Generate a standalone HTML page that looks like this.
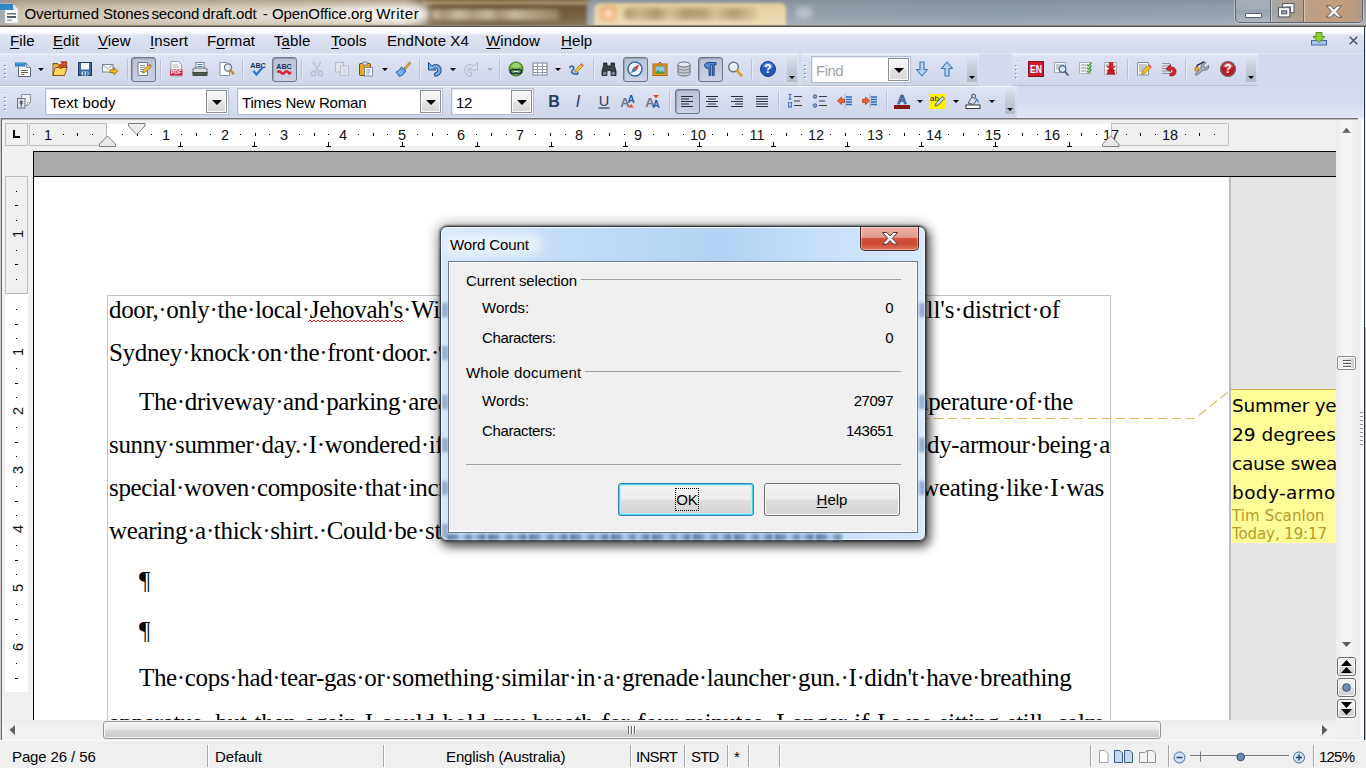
<!DOCTYPE html>
<html lang="en"><head><meta charset="utf-8"><title>Overturned Stones second draft.odt - OpenOffice.org Writer</title>
<style>
*{box-sizing:border-box;margin:0;padding:0}
html,body{width:1366px;height:768px;overflow:hidden;background:#fff}
body{position:relative;font-family:"Liberation Sans",sans-serif;font-size:15px;color:#000}
.a{position:absolute}
.t{position:absolute;white-space:pre;line-height:1}
u{text-decoration:underline;text-underline-offset:2px}
/* title bar */
#title{left:0;top:0;width:1366px;height:27px;overflow:hidden;
 background:linear-gradient(to right,#9aa3ad 0,#b5a68e 14px,#bcad94 250px,#b9a88c 405px,#6b5535 428px,#5e492b 500px,#6e5736 585px,#939ea8 592px,#919da8 780px,#8e9aa6 800px,#8997a6 1000px,#94a0ad 1366px)}
#title .glow{left:10px;top:5px;width:420px;height:18px;border-radius:9px;background:linear-gradient(to right,rgba(255,255,255,.3) 0,rgba(255,255,255,.42) 40%,rgba(255,255,255,.6) 70%,rgba(255,255,255,.95) 92%,rgba(255,255,255,.9) 100%);filter:blur(4px)}
#title .shade{left:0;top:0;width:1366px;height:27px;background:linear-gradient(to bottom,rgba(90,90,90,.18) 0,rgba(120,120,120,.05) 5px,rgba(255,255,255,.05) 50%,rgba(255,255,255,.22) 100%)}
#title .line{left:0;top:25px;width:1366px;height:2px;background:linear-gradient(to bottom,#8d8478 0,#8d8478 50%,#59544d 50%,#59544d 100%)}
#title .txt{left:25px;top:6px;font-size:15px;letter-spacing:-.06px;color:#000}
/* menubar */
#menu{left:0;top:27px;width:1366px;height:27px;background:linear-gradient(to bottom,#fff 0,#fdfdff 4px,#f1f3fa 7px,#dfe4f2 8px,#d9dfef 14px,#d4dbed 100%);border-bottom:1px solid #e1e6f3}
#menu .t{top:6px;font-size:15px;letter-spacing:.1px}
/* toolbars */
#tb{left:0;top:54px;width:1366px;height:64px;background:linear-gradient(to bottom,#d3daed 0,#d3daed 32px,#d5dbee 48px,#e0e5f3 62px,#e4e8f4 64px)}
.bar{position:absolute;height:32px;background:linear-gradient(to bottom,#dde3f2 0,#d6dcee 50%,#d0d7eb 100%);border-top:1px solid #f3f5fb;border-bottom:1px solid #b9c0d4}
.sep{position:absolute;width:1px;height:20px;background:#bac1d4;box-shadow:1px 0 0 #e6eaf5}
.grip{position:absolute;width:1px;height:1px;margin-top:2px;margin-left:-1px;box-shadow:0 0px 0 #6f778c,1px 1px 0 #fff,2px 1px 0 #fff,1px 0px 0 #aab1c4,0 4px 0 #6f778c,1px 5px 0 #fff,2px 5px 0 #fff,1px 4px 0 #aab1c4,0 8px 0 #6f778c,1px 9px 0 #fff,2px 9px 0 #fff,1px 8px 0 #aab1c4,0 12px 0 #6f778c,1px 13px 0 #fff,2px 13px 0 #fff,1px 12px 0 #aab1c4,0 16px 0 #6f778c,1px 17px 0 #fff,2px 17px 0 #fff,1px 16px 0 #aab1c4}
.press{position:absolute;width:25px;height:25px;border:1px solid #6f7688;border-radius:3px;background:linear-gradient(to bottom,#b9c1d6,#cbd2e4);box-shadow:inset 1px 1px 1px rgba(80,90,110,.35)}
.dd{position:absolute;width:0;height:0;border-left:3px solid transparent;border-right:3px solid transparent;border-top:3px solid #000}
.ovf{position:absolute;width:10px;height:26px;background:linear-gradient(to bottom,#dfe3ee 0,#c9cedb 40%,#b4b9c7 100%)}
.ovf:after{content:"";position:absolute;left:2px;bottom:3px;border-left:3px solid transparent;border-right:3px solid transparent;border-top:3px solid #000}
.combo{position:absolute;height:27px;background:#fff;border:1px solid #b4bccf;box-shadow:inset 1px 1px 0 #e8ebf3}
.combo .t{left:4px;top:6px;font-size:15px;letter-spacing:.15px}
.combo .btn{position:absolute;right:1px;top:1px;width:21px;height:23px;border:1px solid #8c8e94;background:linear-gradient(to bottom,#f7f7f7 0,#eeeeee 50%,#e2e2e2 51%,#d8d8d8 100%);box-shadow:inset 0 0 0 1px #fbfbfb}
.combo .btn:after{content:"";position:absolute;left:5px;top:9px;border-left:5px solid transparent;border-right:5px solid transparent;border-top:5px solid #000}
svg{position:absolute;overflow:visible}
</style></head><body>
<!-- TITLE BAR -->
<div id="title" class="a">
 <div class="a" style="left:422px;top:0;width:168px;height:5px;background:#a88f63;filter:blur(1.500px)"></div>
 <div class="a" style="left:432px;top:9px;width:128px;height:11px;border-radius:5px;background:linear-gradient(to right,#bdb098 0,#a39173 10%,#c4b8a0 20%,#a89779 32%,#c2b59d 44%,#a08e6f 52%,#bfb29a 64%,#ad9c7e 78%,#8f7c58 100%);filter:blur(2px);opacity:1"></div>
 <div class="a" style="left:588px;top:0;width:8px;height:26px;background:#97a2ab;filter:blur(2px)"></div>
 <div class="a" style="left:594px;top:3px;width:192px;height:24px;border-radius:6px 6px 0 0;background:#e8d3a4;filter:blur(1.500px)"></div>
 <div class="a" style="left:601px;top:6px;width:15px;height:15px;border-radius:4px;background:radial-gradient(circle,#fff 0,#f7c9a0 35%,#efa25c 70%,#e9c08a 100%);filter:blur(2px)"></div>
 <div class="a" style="left:624px;top:8px;width:134px;height:12px;border-radius:5px;background:linear-gradient(to right,#a89164 0,#c4b084 12%,#a58e62 24%,#d0bc8f 34%,#a89164 46%,#b29c6f 60%,#d0bc8f 68%,#ab9467 82%,#d9c595 100%);filter:blur(2px);opacity:.95"></div>
 <div class="a" style="left:796px;top:7px;width:16px;height:11px;border-radius:5px;background:#c9cfd4;filter:blur(3px);opacity:.8"></div>
 <div class="a shade"></div>
 <div class="a glow"></div>
 <svg style="left:0;top:2px" width="22" height="22" viewBox="0 0 22 22">
  <path d="M1 2h12l5 5v14H5V8H1z" fill="#fff" stroke="#c9ccd2" stroke-width=".8"/>
  <rect x="0" y="2" width="14" height="6" fill="#2f86c9"/>
  <path d="M13 2l5 5h-5z" fill="#dfe4ea"/>
  <rect x="7" y="11" width="9" height="1.6" fill="#6d7780"/><rect x="7" y="14" width="9" height="2" fill="#55616b"/><rect x="7" y="17.5" width="5" height="1.3" fill="#8d979f"/>
 </svg>
 <div class="t txt" style="left:0"><span class="a" style="left:24.5px;top:0">Overturned </span><span class="a" style="left:102.9px;top:0">Stones </span><span class="a" style="left:151.4px;top:0">second </span><span class="a" style="left:202.2px;top:0">draft.odt </span><span class="a" style="left:262.8px;top:0">- </span><span class="a" style="left:271.9px;top:0">OpenOffice.org </span><span class="a" style="left:376.2px;top:0;letter-spacing:.55px">Writer </span></div>
 <!-- window controls -->
 <div class="a" style="left:1235px;top:-1px;width:128px;height:24px;border:1px solid #5f6973;border-top:0;border-radius:0 0 5px 5px;background:linear-gradient(to bottom,rgba(255,255,255,.28),rgba(255,255,255,.12) 45%,rgba(255,255,255,.02) 50%,rgba(255,255,255,.14));box-shadow:0 0 0 1px rgba(255,255,255,.35)"></div>
 <div class="a" style="left:1271px;top:0;width:32px;height:22px;background:linear-gradient(to right,rgba(176,150,122,.25),rgba(184,152,118,.75))"></div><div class="a" style="left:1303px;top:0;width:59px;height:22px;border-radius:0 0 4px 0;background:linear-gradient(to right,#bda084,#c79c72 35%,#c39a74 70%,#b3967c 100%);opacity:.85"></div>
 <div class="a" style="left:1270px;top:0;width:1px;height:22px;background:#5f6973;box-shadow:1px 0 0 rgba(255,255,255,.4)"></div>
 <div class="a" style="left:1303px;top:0;width:1px;height:22px;background:#5f6973;box-shadow:1px 0 0 rgba(255,255,255,.4)"></div>
 <div class="a" style="left:1245px;top:13px;width:17px;height:5px;background:#fff;border:1px solid #56606b;border-radius:1px"></div>
 <svg style="left:1277px;top:2px" width="18.500" height="16.500" viewBox="0 0 18 16"><path d="M5.5 1.5h11v9h-3.500v-5.500h-7.500z" fill="#fff" stroke="#4f5963"/><path d="M8 3.800h6v3" fill="none" stroke="#4f5963" stroke-width="0"/><rect x="1.500" y="5.500" width="11" height="9" fill="#fff" stroke="#4f5963"/><rect x="4.500" y="8.500" width="5" height="3" fill="#9aa5b0" stroke="#4f5963"/><rect x="8.300" y="4" width="5.500" height="1" fill="#8a96a2"/></svg>
 <svg style="left:1324.500px;top:3.500px" width="18" height="15" viewBox="0 0 19 15"><path d="M1.500 1.500h4.500l3.500 3.700 3.500-3.700h4.500l-5.600 6 5.600 6h-4.500l-3.500-3.700-3.500 3.700h-4.500l5.600-6z" fill="#fff" stroke="#4a4f57" stroke-width="1"/></svg>
 <div class="a line"></div>
</div>
<!-- MENU BAR -->
<div id="menu" class="a">
 <div class="t" style="left:10px"><u>F</u>ile</div>
 <div class="t" style="left:53px"><u>E</u>dit</div>
 <div class="t" style="left:98px"><u>V</u>iew</div>
 <div class="t" style="left:150px"><u>I</u>nsert</div>
 <div class="t" style="left:207px">F<u>o</u>rmat</div>
 <div class="t" style="left:274px">T<u>a</u>ble</div>
 <div class="t" style="left:331px"><u>T</u>ools</div>
 <div class="t" style="left:387px">EndNote X4</div>
 <div class="t" style="left:486px"><u>W</u>indow</div>
 <div class="t" style="left:561px"><u>H</u>elp</div>
 <svg style="left:1311px;top:5px" width="16" height="14" viewBox="0 0 16 14"><rect x=".5" y="8.500" width="15" height="4.500" fill="#a8c4e6" stroke="#3f6fb0"/><path d="M5 .5h6v4h3l-6 6-6-6h3z" fill="#8bd02c" stroke="#4d8a12" stroke-width=".9"/></svg>
 <svg style="left:1349px;top:9px" width="9" height="9" viewBox="0 0 9 9"><path d="M.7.7l7.600 7.600M8.300.7l-7.600 7.600" stroke="#4b5166" stroke-width="1.400"/></svg>
</div>
<!-- TOOLBARS -->
<div id="tb" class="a">
<div class="bar" style="left:0;top:0;width:799px"></div>
<div class="bar" style="left:801px;top:0;width:178px"></div>
<div class="bar" style="left:1012px;top:0;width:246px"></div>
<div class="bar" style="left:0;top:32px;width:1017px;border-bottom-color:#d3daed"></div>
<div class="grip" style="left:5px;top:5px"></div>
<svg style="left:15px;top:7px" width="16" height="16" viewBox="0 0 16 16"><path d="M3.500 2.500h8l4 4v9h-12z" fill="#fff" stroke="#5d6873"/><path d="M11.500 2.500v4h4" fill="#e6ebf1" stroke="#5d6873" stroke-width=".8"/><rect x="0" y="1.500" width="10.500" height="4" fill="#2c82c9"/><rect x="1" y="2.300" width="8.500" height="1" fill="#5ea5df"/><path d="M6 9.500h7M6 11.500h7" stroke="#5a646e" stroke-width="1"/><path d="M6 13.500h3.500" stroke="#c87838" stroke-width="1"/></svg>
<div class="dd" style="left:38px;top:14px"></div>
<svg style="left:52px;top:7px" width="16" height="16" viewBox="0 0 16 16"><path d="M1 5v-2.500h4.500l1 1.500h5.500v3" fill="#f2a91e" stroke="#7a4a08" stroke-width=".9"/><path d="M.8 14.500l2.200-8h12l-2.500 8z" fill="#ffd75a" stroke="#7a4a08" stroke-width=".9" stroke-linejoin="round"/><path d="M1 5v9.500" stroke="#7a4a08" stroke-width=".9"/><path d="M7.500 7l4.500-4.500" stroke="#7a2a08" stroke-width="3.400"/><path d="M9 .8h5.700v5.700z" fill="#e8501a" stroke="#7a2a08" stroke-width=".8"/><path d="M7.500 7l4.500-4.500" stroke="#e8501a" stroke-width="2"/></svg>
<svg style="left:77px;top:7px" width="16" height="16" viewBox="0 0 16 16"><rect x="1.500" y="1.500" width="13" height="13" fill="#3d6a9e" stroke="#1c3a60"/><rect x="4" y="2" width="8" height="6.500" fill="#f4f7fb"/><rect x="4.500" y="10.500" width="7" height="4" fill="#cfd8e6"/><rect x="6" y="11" width="1.600" height="3.500" fill="#3d6a9e"/><rect x="9" y="11" width="1.600" height="3.500" fill="#3d6a9e"/></svg>
<svg style="left:102px;top:7px" width="16" height="16" viewBox="0 0 16 16"><rect x=".5" y="3.500" width="10.500" height="7.500" fill="#fbfbf8" stroke="#7f868e"/><path d="M.8 3.800l5 4 5-4" fill="none" stroke="#8a9199" stroke-width=".9"/><path d="M8 8.800h4v-2.300l3.700 3.700-3.700 3.700v-2.300h-4z" fill="#f6c21c" stroke="#8a5a08" stroke-width=".8"/></svg>
<div class="sep" style="left:127px;top:5px"></div>
<div class="press" style="left:131px;top:2.5px"></div>
<svg style="left:136px;top:7px" width="16" height="16" viewBox="0 0 16 16"><path d="M2 1.500h9.500v13h-9.500z" fill="#fdfdfd" stroke="#6e7680"/><path d="M4 4.500h5M4 6.500h5M4 8.500h4M4 10.500h3" stroke="#8b949e"/><path d="M6.500 12l1-3 6-6 2 2-6 6z" fill="#f2c230" stroke="#7a5a10" stroke-width=".7"/><path d="M12.500 4l1-1 2 2-1 1z" fill="#e4668a"/></svg>
<div class="sep" style="left:160px;top:5px"></div>
<svg style="left:168px;top:7px" width="16" height="16" viewBox="0 0 16 16"><path d="M3 .5h7.500l3 3v11.500h-10.500z" fill="#fff" stroke="#9aa1a9"/><path d="M5 4h5M5 6h6" stroke="#a8b0b8"/><rect x="2" y="8.500" width="12.500" height="6" fill="#c8242b"/><text x="8.200" y="13.400" font-family="Liberation Sans,sans-serif" font-weight="bold" font-size="5.500" fill="#fff" text-anchor="middle">PDF</text></svg>
<svg style="left:192px;top:7px" width="16" height="16" viewBox="0 0 16 16"><rect x="4" y="1.500" width="8" height="6" fill="#fff" stroke="#7b828a"/><path d="M5.500 3.500h5M5.500 5.500h5" stroke="#4f86c6"/><path d="M1 8.500q0-1.500 1.500-1.500h11q1.500 0 1.500 1.500v4.500h-14z" fill="#d8dbdf" stroke="#5d646c" stroke-width=".9"/><rect x="1" y="11.500" width="14" height="3" fill="#4d5a4e" stroke="#353d36" stroke-width=".8"/></svg>
<svg style="left:218px;top:7px" width="16" height="16" viewBox="0 0 16 16"><path d="M2 1.500h7l2.500 2.500v10.500h-9.500z" fill="#fff" stroke="#8a9199"/><circle cx="10" cy="6.500" r="3.600" fill="#dcecf8" fill-opacity=".85" stroke="#6a7480" stroke-width="1.200"/><path d="M12.500 9.200l3 3.500" stroke="#c08a28" stroke-width="2.200" stroke-linecap="round"/></svg>
<div class="sep" style="left:242px;top:5px"></div>
<svg style="left:250px;top:7px" width="16" height="16" viewBox="0 0 16 16"><text x="8" y="6.500" font-family="Liberation Sans,sans-serif" font-weight="bold" font-size="8" fill="#1b2f55" text-anchor="middle" textLength="15.500" lengthAdjust="spacingAndGlyphs">ABC</text><path d="M3.500 10l3 3.500 6-7" fill="none" stroke="#2d78d2" stroke-width="2.400"/></svg>
<div class="press" style="left:272px;top:2.5px"></div>
<svg style="left:276px;top:7px" width="16" height="16" viewBox="0 0 16 16"><text x="8" y="7.500" font-family="Liberation Sans,sans-serif" font-weight="bold" font-size="8" fill="#1b2f55" text-anchor="middle" textLength="15.500" lengthAdjust="spacingAndGlyphs">ABC</text><path d="M1.500 11.500q1.800-2.500 3.600 0t3.600 0 3.600 0 2.200-.8" fill="none" stroke="#d3242a" stroke-width="2.300"/></svg>
<div class="sep" style="left:301px;top:5px"></div>
<svg style="left:309px;top:7px" width="16" height="16" viewBox="0 0 16 16"><path d="M4 1l5.500 9M12 1l-5.500 9" stroke="#bcc2d0" stroke-width="1.500"/><circle cx="4.500" cy="12.500" r="2.200" fill="none" stroke="#b8bdca" stroke-width="1.400"/><circle cx="11.500" cy="12.500" r="2.200" fill="none" stroke="#b8bdca" stroke-width="1.400"/></svg>
<svg style="left:334px;top:7px" width="16" height="16" viewBox="0 0 16 16"><rect x="1.500" y="1.500" width="8" height="9.500" fill="#dfe3ec" stroke="#b4bac8"/><rect x="6.500" y="5" width="8" height="9.500" fill="#e6e9f0" stroke="#b4bac8"/><path d="M8.500 8h4M8.500 10h4M8.500 12h4" stroke="#c0c5d1"/></svg>
<svg style="left:358px;top:7px" width="16" height="16" viewBox="0 0 16 16"><rect x="1.500" y="2.500" width="11" height="12" rx="1" fill="#e3ac1e" stroke="#6d4a10"/><rect x="4.500" y="1" width="5" height="3" rx="1" fill="#d8dce2" stroke="#6a717a" stroke-width=".8"/><rect x="6.500" y="6.500" width="8" height="8.500" fill="#fff" stroke="#7d848c" stroke-width=".9"/><path d="M8.500 9h4M8.500 11h4M8.500 13h3" stroke="#6d8fb8"/></svg>
<div class="dd" style="left:381.5px;top:14px"></div>
<svg style="left:395px;top:7px" width="16" height="16" viewBox="0 0 16 16"><path d="M9 7l5.500-6 1.200 1.200-5.200 6.300z" fill="#e6b23c" stroke="#8a6414" stroke-width=".7"/><path d="M1 11q3-.5 5.500-5l4.500 4q-3 4.500-6.500 5.500z" fill="#5a9de2" stroke="#1f57a0" stroke-width=".9"/><path d="M3 12.500l3-3M5 14l3-3.500" stroke="#cfe2f7" stroke-width=".8"/></svg>
<div class="sep" style="left:419px;top:5px"></div>
<svg style="left:427px;top:7px" width="16" height="16" viewBox="0 0 16 16"><path d="M5.500 6.500q4.500-3 6.500 .8t-3 6.200" stroke="#1f4f8c" stroke-width="4.400" fill="none" stroke-linecap="round"/><path d="M1.500 1.500v7.500h7.500z" fill="#7ab0e4" stroke="#1f4f8c" stroke-linejoin="round"/><path d="M5.500 6.500q4.500-3 6.500 .8t-3 6.200" stroke="#7ab0e4" stroke-width="2.400" fill="none" stroke-linecap="round"/></svg>
<div class="dd" style="left:450px;top:14px"></div>
<svg style="left:463px;top:7px" width="16" height="16" viewBox="0 0 16 16"><path d="M10.500 6.500q-4.500-3-6.500 .8t3 6.200" stroke="#b4bbcb" stroke-width="4.400" fill="none" stroke-linecap="round"/><path d="M14.500 1.500v7.500h-7.500z" fill="#d9deea" stroke="#b4bbcb" stroke-linejoin="round"/><path d="M10.500 6.500q-4.500-3-6.500 .8t3 6.200" stroke="#d9deea" stroke-width="2.400" fill="none" stroke-linecap="round"/></svg>
<div class="dd" style="left:486.5px;top:14px;border-top-color:#aab0c0"></div>
<div class="sep" style="left:499px;top:5px"></div>
<svg style="left:508px;top:7px" width="16" height="16" viewBox="0 0 16 16"><circle cx="8" cy="8" r="7" fill="#6cb63c" stroke="#2f6a1c"/><path d="M3 5q2-3 5-3.500 3 .5 5 3.500-2 2-5 2t-5-2z" fill="#a6dc78" fill-opacity=".8"/><rect x="2.500" y="8.500" width="5.500" height="4" rx="2" fill="none" stroke="#1e2f50" stroke-width="1.500"/><rect x="8" y="8.500" width="5.500" height="4" rx="2" fill="none" stroke="#1e2f50" stroke-width="1.500"/><path d="M6 10.500h4" stroke="#e8eef8" stroke-width="1.300"/></svg>
<svg style="left:532px;top:7px" width="16" height="16" viewBox="0 0 16 16"><rect x="1" y="2" width="14" height="12" fill="#fff" stroke="#7d8590"/><path d="M1 5.500h14M1 8.500h14M1 11.500h14M5.500 2v12M10.500 2v12" stroke="#8a929c" stroke-width=".9"/></svg>
<div class="dd" style="left:555px;top:14px"></div>
<svg style="left:568px;top:7px" width="16" height="16" viewBox="0 0 16 16"><path d="M1.500 7q1.500-3 3.500-1.500t-.5 4 2 3.500 3-2" fill="none" stroke="#2c64b8" stroke-width="1.600"/><path d="M6.500 11.500l1-3 6-6 2 2-6 6z" fill="#f4c838" stroke="#8a6a12" stroke-width=".7"/><path d="M12.500 3.500l1-1 2 2-1 1z" fill="#e8608a"/></svg>
<div class="sep" style="left:593px;top:5px"></div>
<svg style="left:601px;top:7px" width="16" height="16" viewBox="0 0 16 16"><path d="M2.500 2h3.500v3h4v-3h3.500v3l1.500 5v4.500h-5v-5h-4v5h-5v-4.500l1.500-5z" fill="#3c4048" stroke="#15171b" stroke-width=".8"/><rect x="2" y="11" width="3.500" height="3" fill="#7a828e"/><rect x="10.500" y="11" width="3.500" height="3" fill="#7a828e"/></svg>
<div class="press" style="left:622.5px;top:2.5px"></div>
<svg style="left:627px;top:7px" width="16" height="16" viewBox="0 0 16 16"><circle cx="8" cy="8" r="7" fill="#f6f8fb" stroke="#3d6aa8" stroke-width="1.600"/><path d="M12.500 3.500l-3 6-3-3z" fill="#d8342c"/><path d="M3.500 12.500l3-6 3 3z" fill="#3a6fc0"/></svg>
<svg style="left:652px;top:7px" width="16" height="16" viewBox="0 0 16 16"><rect x="1" y="3" width="14" height="11.500" fill="#f2a420" stroke="#a86008"/><rect x="3" y="5" width="10" height="7.500" fill="#8fc8f0" stroke="#7a4a08" stroke-width=".6"/><path d="M3 12.500l3-4 2.500 2.500 2-1.500 2.500 3z" fill="#4fa030"/><path d="M6 3l2-2 2 2" fill="none" stroke="#a86008"/></svg>
<svg style="left:676px;top:7px" width="16" height="16" viewBox="0 0 16 16"><path d="M2 3.500v9q0 2.500 6 2.500t6-2.500v-9z" fill="#c8ccd2" stroke="#6b727b"/><ellipse cx="8" cy="3.500" rx="6" ry="2.500" fill="#e8eaee" stroke="#6b727b"/><path d="M2 6.500q0 2.500 6 2.500t6-2.500M2 9.500q0 2.500 6 2.500t6-2.500" fill="none" stroke="#7d848d"/></svg>
<div class="press" style="left:698px;top:2.5px"></div>
<svg style="left:702px;top:7px" width="16" height="16" viewBox="0 0 16 16"><path d="M7 14.500v-7q-4.500 0-4.500-3t4.500-3h7v2.200h-1.800v10.800h-1.800v-10.800h-1.600v10.800z" fill="#4c8ad2" stroke="#173f7c" stroke-width=".9"/></svg>
<svg style="left:727px;top:7px" width="16" height="16" viewBox="0 0 16 16"><circle cx="6.500" cy="6" r="4.800" fill="#e4f0fb" stroke="#6d7782" stroke-width="1.400"/><path d="M4 4.500q1.500-2 4-1.500" stroke="#fff" stroke-width="1.200" fill="none"/><path d="M10 9.800l4.500 4.700" stroke="#d49a2a" stroke-width="2.600" stroke-linecap="round"/></svg>
<div class="sep" style="left:751px;top:5px"></div>
<svg style="left:760px;top:7px" width="16" height="16" viewBox="0 0 16 16"><circle cx="8" cy="8" r="7.500" fill="#2458b8" stroke="#143a84"/><path d="M2.500 5.500q2-4 5.500-4t5.500 4q-2.500 1.500-5.500 1.500t-5.500-1.500z" fill="#6b98e0" fill-opacity=".7"/><text x="8" y="12.300" font-family="Liberation Sans,sans-serif" font-weight="bold" font-size="12" fill="#fff" text-anchor="middle">?</text></svg>
<div class="ovf" style="left:787px;top:2px"></div>
<div class="grip" style="left:805px;top:5px"></div>
<div class="combo" style="left:811px;top:2px;width:100px"><div class="t" style="color:#a3a3a3;font-size:15px;top:6px;letter-spacing:-.5px">Find</div><div class="btn"></div></div>
<svg style="left:914px;top:7px" width="16" height="16" viewBox="0 0 16 16"><path d="M6 1h4v7.500h3.500l-5.500 6.500-5.500-6.500h3.500z" fill="#b3d5f1" stroke="#3a78b5" stroke-width="1.100" stroke-linejoin="round"/></svg>
<svg style="left:939px;top:7px" width="16" height="16" viewBox="0 0 16 16"><path d="M6 15h4v-7.500h3.500l-5.500-6.500-5.500 6.500h3.500z" fill="#b3d5f1" stroke="#3a78b5" stroke-width="1.100" stroke-linejoin="round"/></svg>
<div class="ovf" style="left:967px;top:2px"></div>
<div class="grip" style="left:1016px;top:5px"></div>
<svg style="left:1028px;top:7px" width="16" height="16" viewBox="0 0 16 16"><rect x=".5" y=".5" width="15" height="15" fill="#c81e2c" stroke="#8a0f1a"/><text x="8" y="12" font-family="Liberation Sans,sans-serif" font-weight="bold" font-size="10" fill="#fff" text-anchor="middle" textLength="12" lengthAdjust="spacingAndGlyphs">EN</text></svg>
<svg style="left:1053px;top:7px" width="16" height="16" viewBox="0 0 16 16"><path d="M1.500 1.500h11v10h-11z" fill="#f4f5f7" stroke="#9aa1a9"/><path d="M3 4h8M3 6h8M3 8h5" stroke="#9aa2ac"/><path d="M2 11.500l2.500 3v-3z" fill="#cfd3d8"/><circle cx="9.500" cy="8" r="3.300" fill="#cfe6f8" fill-opacity=".9" stroke="#46698c" stroke-width="1.200"/><path d="M12 10.500l3.300 4" stroke="#4a5a6a" stroke-width="1.800"/></svg>
<svg style="left:1078px;top:7px" width="16" height="16" viewBox="0 0 16 16"><path d="M1.500 1.500h11v11h-11z" fill="#f4f5f7" stroke="#a8aeb5"/><path d="M3 4h5M3 7h5M3 10h5" stroke="#8f979f"/><path d="M9 3.500l1.500 1.500 3-3.500M9 6.800l1.500 1.500 3-3.500M9 10l1.500 1.500 3-3.500" fill="none" stroke="#3fa838" stroke-width="1.500"/><path d="M2 12.500l2.500 3v-3z" fill="#d4d7dc"/></svg>
<svg style="left:1103px;top:7px" width="16" height="16" viewBox="0 0 16 16"><path d="M1.500 1.500h12v12h-12z" fill="#f0f1f3" stroke="#a8aeb5"/><path d="M3 4h9M3 12h9" stroke="#8f979f"/><path d="M6 1h4v4h3l-5 4.500-5-4.500h3z" fill="#d0202a"/><path d="M3 10l5-3.500 5 3.500-2 .5 1.500 3h-9l1.500-3z" fill="#c01822"/></svg>
<div class="sep" style="left:1127px;top:5px"></div>
<svg style="left:1136px;top:7px" width="16" height="16" viewBox="0 0 16 16"><path d="M1.500 1.500h11v12.500h-11z" fill="#fbfbfb" stroke="#8a9098"/><path d="M3 4h8M3 6h8M3 8h6M3 10h5" stroke="#8f979f"/><path d="M5.500 13.500l1-3.500 6-6 2.500 2.500-6 6z" fill="#f2bf2c" stroke="#94660c" stroke-width=".7"/><path d="M12 4.500l1.200-1.200 2.500 2.500-1.200 1.200z" fill="#e25a4a"/></svg>
<svg style="left:1161px;top:7px" width="16" height="16" viewBox="0 0 16 16"><path d="M1 2.500h8M1 5h7M1 7.500h6M1 10h7M1 12.500h8" stroke="#8f979f"/><path d="M5 8l4.500-4.500v2.500q5.500 0 5.500 4.500t-6 4.500v-2.500q3 0 3-2.200t-2.500-2.200v2.500z" fill="#d8262c" stroke="#8c0e14" stroke-width=".8"/></svg>
<div class="sep" style="left:1185px;top:5px"></div>
<svg style="left:1194px;top:7px" width="16" height="16" viewBox="0 0 16 16"><path d="M2.500 14.500l-1.300-1.300 6-6.200q-1-3 1.300-4.800 1.800-1.200 3.500-.5l-2.500 2.500 .5 2 2 .5 2.500-2.500q.8 2-.6 3.700-1.800 2-4.600 1.100z" fill="#aab2bc" stroke="#565e68" stroke-width=".8"/><path d="M2 8l1.200-3.500 7-4" stroke="#1b1d22" stroke-width="1.300" fill="none"/><path d="M.8 7.500q1.200-2.500 3-1.500t.5 3-3 1z" fill="#f0b424" stroke="#8e640c" stroke-width=".7"/></svg>
<svg style="left:1219.5px;top:7px" width="16" height="16" viewBox="0 0 16 16"><circle cx="8" cy="8" r="7.500" fill="#c01c26" stroke="#6e6e72" stroke-width="1.200"/><path d="M2.800 5.500q2-3.800 5.200-3.800t5.200 3.800q-2.500 1.300-5.200 1.300t-5.200-1.300z" fill="#e88a8e" fill-opacity=".7"/><text x="8" y="12.300" font-family="Liberation Sans,sans-serif" font-weight="bold" font-size="12" fill="#fff" text-anchor="middle">?</text></svg>
<div class="ovf" style="left:1246px;top:2px"></div>
<div class="grip" style="left:5px;top:37px"></div>
<svg style="left:16px;top:39px" width="16" height="16" viewBox="0 0 16 16"><path d="M5.500 1.500h9v8l-3 3h-6z" fill="#eef0f4" stroke="#8d949e"/><path d="M14.500 9.500h-3v3z" fill="#fff" stroke="#8d949e" stroke-width=".7"/><rect x="1.500" y="5.500" width="7.500" height="9.500" fill="#dfe3ea" stroke="#6d747e"/><path d="M5.200 7.500v6M3.500 10h3.500M3.800 8.200h2.800" stroke="#3c424a" stroke-width="1.100"/></svg>
<div class="combo" style="left:45px;top:34px;width:184px"><div class="t">Text body</div><div class="btn"></div></div>
<div class="combo" style="left:237px;top:34px;width:206px"><div class="t" style="letter-spacing:-.17px">Times New Roman</div><div class="btn"></div></div>
<div class="combo" style="left:451px;top:34px;width:83px"><div class="t" style="letter-spacing:-.3px">12</div><div class="btn"></div></div>
<svg style="left:546px;top:39px" width="16" height="16" viewBox="0 0 16 16"><text x="8" y="13.500" font-family="Liberation Sans,sans-serif" font-weight="bold" font-size="16" fill="#2b3d5c" text-anchor="middle">B</text></svg>
<svg style="left:570px;top:39px" width="16" height="16" viewBox="0 0 16 16"><text x="8" y="13.500" font-family="Liberation Sans,sans-serif" font-style="italic" font-size="16" fill="#2b3d5c" text-anchor="middle">I</text></svg>
<svg style="left:596px;top:39px" width="16" height="16" viewBox="0 0 16 16"><text x="8" y="12.500" font-family="Liberation Sans,sans-serif" font-size="14.500" fill="#2b3d5c" text-anchor="middle">U</text><path d="M2.500 15h11" stroke="#2b3d5c" stroke-width="1.200"/></svg>
<svg style="left:620px;top:39px" width="16" height="16" viewBox="0 0 16 16"><text x="5" y="14" font-family="Liberation Sans,sans-serif" font-weight="bold" font-size="13" fill="#6d7686" text-anchor="middle">A</text><text x="11" y="9.500" font-family="Liberation Sans,sans-serif" font-weight="bold" font-size="10" fill="#1e5aa8" text-anchor="middle">A</text><path d="M8 14.500l3-3.500 3 3.500z" fill="#e8502a"/></svg>
<svg style="left:645px;top:39px" width="16" height="16" viewBox="0 0 16 16"><text x="5" y="14" font-family="Liberation Sans,sans-serif" font-weight="bold" font-size="13" fill="#6d7686" text-anchor="middle">A</text><text x="11" y="14.500" font-family="Liberation Sans,sans-serif" font-weight="bold" font-size="10" fill="#1e5aa8" text-anchor="middle">A</text><path d="M8 2l3 3.500 3-3.500z" fill="#e8502a"/></svg>
<div class="sep" style="left:669px;top:37px"></div>
<div class="press" style="left:674.5px;top:34.5px"></div>
<svg style="left:679px;top:39px" width="16" height="16" viewBox="0 0 16 16"><path d="M2 3.500h12M2 6h8M2 8.500h12M2 11h8M2 13.500h12" stroke="#2a2e36" stroke-width="1.100"/></svg>
<svg style="left:703.5px;top:39px" width="16" height="16" viewBox="0 0 16 16"><path d="M2 3.500h12M4 6h8M2 8.500h12M4 11h8M2 13.500h12" stroke="#2a2e36" stroke-width="1.100"/></svg>
<svg style="left:728.5px;top:39px" width="16" height="16" viewBox="0 0 16 16"><path d="M2 3.500h12M6 6h8M2 8.500h12M6 11h8M2 13.500h12" stroke="#2a2e36" stroke-width="1.100"/></svg>
<svg style="left:754px;top:39px" width="16" height="16" viewBox="0 0 16 16"><path d="M2 3.500h12M2 6h12M2 8.500h12M2 11h12M2 13.500h12" stroke="#2a2e36" stroke-width="1.100"/></svg>
<div class="sep" style="left:778px;top:37px"></div>
<svg style="left:787px;top:39px" width="16" height="16" viewBox="0 0 16 16"><path d="M7 3.500h8M7 8h6M7 12.500h8" stroke="#3a3f48" stroke-width="1.200"/><path d="M1.500 1.500h3M3 1.500v4.500M1.500 6h3M1 9.500h1.500M3.500 9.500h1.500M1.700 9.500v4.500M4.300 9.500v4.500M1 14h4" stroke="#2f66b0" stroke-width="1"/></svg>
<svg style="left:812px;top:39px" width="16" height="16" viewBox="0 0 16 16"><path d="M7 3.500h8M7 8h6M7 12.500h8" stroke="#3a3f48" stroke-width="1.200"/><circle cx="3" cy="3.500" r="1.700" fill="#8fb4e0" stroke="#244f90" stroke-width=".9"/><circle cx="3" cy="12.500" r="1.700" fill="#8fb4e0" stroke="#244f90" stroke-width=".9"/></svg>
<svg style="left:837px;top:39px" width="16" height="16" viewBox="0 0 16 16"><path d="M8 1.500v13" stroke="#6d7480" stroke-width=".9" stroke-dasharray="1 1"/><path d="M9 4h6M9 6.500h6M9 9h6M9 11.500h6" stroke="#2f6fc0" stroke-width="1.300"/><path d="M7.500 6.200h-3v-2.200l-4 3.800 4 3.800v-2.200h3z" fill="#f0642c" stroke="#a8300c" stroke-width=".7"/></svg>
<svg style="left:862px;top:39px" width="16" height="16" viewBox="0 0 16 16"><path d="M8 1.500v13" stroke="#6d7480" stroke-width=".9" stroke-dasharray="1 1"/><path d="M9 4h6M9 6.500h6M9 9h6M9 11.500h6" stroke="#2f6fc0" stroke-width="1.300"/><path d="M.5 6.200h3v-2.200l4 3.800-4 3.800v-2.200h-3z" fill="#f0642c" stroke="#a8300c" stroke-width=".7"/></svg>
<div class="sep" style="left:886px;top:37px"></div>
<svg style="left:893.5px;top:39px" width="16" height="16" viewBox="0 0 16 16"><text x="8" y="10.500" font-family="Liberation Sans,sans-serif" font-weight="bold" font-size="13" fill="#5a8ad0" stroke="#1c3f7c" stroke-width=".6" text-anchor="middle">A</text><rect x="0" y="12" width="16" height="4" fill="#8c1414"/></svg>
<div class="dd" style="left:917px;top:46px"></div>
<svg style="left:930px;top:39px" width="16" height="16" viewBox="0 0 16 16"><rect x="0" y="1" width="15" height="15" fill="#fff200"/><text x="4.500" y="8" font-family="Liberation Sans,sans-serif" font-size="8" fill="#222" text-anchor="middle">ab</text><path d="M5 13l1-3 6.500-6.500 2.200 2.200-6.500 6.500z" fill="#c8ccd4" stroke="#4a525e" stroke-width=".8"/></svg>
<div class="dd" style="left:953px;top:46px"></div>
<svg style="left:965px;top:39px" width="16" height="16" viewBox="0 0 16 16"><rect x="1" y="12" width="14" height="3.500" fill="#fff" stroke="#222" stroke-width=".9"/><path d="M3 10l4-6 5 2.500-3.500 5z" fill="#d4dae4" stroke="#3c4654" stroke-width=".9"/><path d="M7 4q-1-3 1.500-3t2 3.500" fill="none" stroke="#3c4654" stroke-width="1"/><path d="M11 5q3 1 3 5-2-1-3-3z" fill="#5a8ad0"/></svg>
<div class="dd" style="left:989px;top:46px"></div>
<div class="ovf" style="left:1005px;top:34px"></div>
</div>
<!-- RULER + DOCUMENT -->
<style>
#work{left:0;top:118px;width:1366px;height:622px;background:#f0f0f0;overflow:hidden}
#hr{left:29px;top:5px;width:1200px;height:23px;background:#fff;border:1px solid #bdbdbd;border-bottom-color:#fff;border-top-color:#f4f4f4;font-size:14.500px}
#hr .g{position:absolute;top:-1px;height:23px;background:#f0f0f0;border-bottom:1px solid #bdbdbd;border-top:1px solid #bdbdbd}
#hr .n{position:absolute;top:2px;width:30px;margin-left:-15px;text-align:center;font-size:14.500px;line-height:18px;color:#111}
#hr .d{position:absolute;top:10px;width:1px;height:1px;background:#000}
#hr .h{position:absolute;top:9px;width:1px;height:3px;background:#000}
#hr .tab{position:absolute;top:18px;width:5px;height:5px;border-bottom:1px solid #000;margin-left:-3px}
#hr .tab:after{content:"";position:absolute;left:2px;top:0;width:1px;height:4px;background:#000}
#vr{left:5px;top:58px;width:23px;height:516px;background:#fff}
#vr .g{position:absolute;left:0;top:0;width:23px;height:118px;background:#f0f0f0;border:1px solid #bdbdbd}
#vr .n{position:absolute;left:4px;width:18px;height:30px;margin-top:-15px;font-size:14.500px;line-height:18px;color:#111}
#vr .n span{position:absolute;left:0;top:6px;width:18px;height:18px;text-align:center;transform:rotate(-90deg)}
#vr .d{position:absolute;left:11px;width:1px;height:1px;background:#000;margin-top:1px}
#vr .h{position:absolute;left:10px;width:3px;height:1px;background:#000;margin-top:1px}
#docpg{left:33px;top:33px;width:1303px;height:570px;background:#fff;border-left:1px solid #000;overflow:hidden}
#docpg .band{left:0;top:0;width:1303px;height:26px;background:#aaa;border-top:1px solid #000;border-bottom:1px solid #000}
#docpg .cm{left:1195px;top:26px;width:108px;height:560px;background:#e6e6e6;border-left:2px solid #bcbcbc}
.dl{position:absolute;white-space:pre;font-family:"Liberation Serif",serif;font-size:25px;line-height:28px;letter-spacing:-.34px;color:#000}

</style>
<div id="work" class="a">
<div class="a" style="left:0;top:0;width:1358px;height:1px;background:#767676"></div><div class="a" style="left:2px;top:1px;width:1356px;height:1px;background:#b8b8b8"></div>
<div class="a" style="left:0;top:0;width:1px;height:622px;background:#c8c8c8"></div><div class="a" style="left:1px;top:0;width:1px;height:622px;background:#6e6e6e"></div>
<div class="a" style="left:5px;top:5px;width:23px;height:23px;border:1px solid #bdbdbd;background:#f0f0f0"><div class="a" style="left:7px;top:6px;width:2px;height:8px;background:#000"></div><div class="a" style="left:7px;top:12px;width:7px;height:2px;background:#000"></div></div>
<div id="hr" class="a">
<div class="g" style="left:0;width:77px;border-right:1px solid #bdbdbd"></div>
<div class="g" style="left:1081px;width:117px;border-left:1px solid #bdbdbd"></div>
<div class="d" style="left:3px"></div>
<div class="n" style="left:18px">1</div>
<div class="d" style="left:33px"></div>
<div class="h" style="left:47px"></div>
<div class="d" style="left:62px"></div>
<div class="d" style="left:92px"></div>
<div class="h" style="left:107px"></div>
<div class="d" style="left:121px"></div>
<div class="n" style="left:136px">1</div>
<div class="d" style="left:151px"></div>
<div class="h" style="left:166px"></div>
<div class="d" style="left:180px"></div>
<div class="n" style="left:195px">2</div>
<div class="d" style="left:210px"></div>
<div class="h" style="left:225px"></div>
<div class="d" style="left:239px"></div>
<div class="n" style="left:254px">3</div>
<div class="d" style="left:269px"></div>
<div class="h" style="left:284px"></div>
<div class="d" style="left:298px"></div>
<div class="n" style="left:313px">4</div>
<div class="d" style="left:328px"></div>
<div class="h" style="left:343px"></div>
<div class="d" style="left:357px"></div>
<div class="n" style="left:372px">5</div>
<div class="d" style="left:387px"></div>
<div class="h" style="left:402px"></div>
<div class="d" style="left:417px"></div>
<div class="n" style="left:431px">6</div>
<div class="d" style="left:446px"></div>
<div class="h" style="left:461px"></div>
<div class="d" style="left:476px"></div>
<div class="n" style="left:490px">7</div>
<div class="d" style="left:505px"></div>
<div class="h" style="left:520px"></div>
<div class="d" style="left:535px"></div>
<div class="n" style="left:549px">8</div>
<div class="d" style="left:564px"></div>
<div class="h" style="left:579px"></div>
<div class="d" style="left:594px"></div>
<div class="n" style="left:608px">9</div>
<div class="d" style="left:623px"></div>
<div class="h" style="left:638px"></div>
<div class="d" style="left:653px"></div>
<div class="n" style="left:668px">10</div>
<div class="d" style="left:682px"></div>
<div class="h" style="left:697px"></div>
<div class="d" style="left:712px"></div>
<div class="n" style="left:727px">11</div>
<div class="d" style="left:741px"></div>
<div class="h" style="left:756px"></div>
<div class="d" style="left:771px"></div>
<div class="n" style="left:786px">12</div>
<div class="d" style="left:800px"></div>
<div class="h" style="left:815px"></div>
<div class="d" style="left:830px"></div>
<div class="n" style="left:845px">13</div>
<div class="d" style="left:859px"></div>
<div class="h" style="left:874px"></div>
<div class="d" style="left:889px"></div>
<div class="n" style="left:904px">14</div>
<div class="d" style="left:918px"></div>
<div class="h" style="left:933px"></div>
<div class="d" style="left:948px"></div>
<div class="n" style="left:963px">15</div>
<div class="d" style="left:978px"></div>
<div class="h" style="left:992px"></div>
<div class="d" style="left:1007px"></div>
<div class="n" style="left:1022px">16</div>
<div class="d" style="left:1037px"></div>
<div class="h" style="left:1051px"></div>
<div class="d" style="left:1066px"></div>
<div class="n" style="left:1081px">17</div>
<div class="d" style="left:1096px"></div>
<div class="h" style="left:1110px"></div>
<div class="d" style="left:1125px"></div>
<div class="n" style="left:1140px">18</div>
<div class="d" style="left:1155px"></div>
<div class="h" style="left:1169px"></div>
<div class="d" style="left:1184px"></div>
<div class="tab" style="left:151px"></div>
<div class="tab" style="left:225px"></div>
<div class="tab" style="left:299px"></div>
<div class="tab" style="left:373px"></div>
<div class="tab" style="left:448px"></div>
<div class="tab" style="left:522px"></div>
<div class="tab" style="left:596px"></div>
<div class="tab" style="left:670px"></div>
<div class="tab" style="left:744px"></div>
<div class="tab" style="left:818px"></div>
<div class="tab" style="left:892px"></div>
<div class="tab" style="left:966px"></div>
<div class="tab" style="left:1040px"></div>
</div>
<svg style="left:99px;top:3px" width="48" height="28" viewBox="0 0 48 28"><path d="M.5 25.500v-2.500l8-8 8 8v2.500z" fill="#e9e9e9" stroke="#7d7d7d"/><path d="M29.500 2.500h16.500v2.500l-8.200 8.500-8.300-8.500z" fill="#ececec" stroke="#7d7d7d"/></svg>
<svg style="left:1102px;top:17px" width="18" height="12" viewBox="0 0 18 12"><path d="M.5 11.500v-2.500l8.200-8 8.200 8v2.500z" fill="#e9e9e9" stroke="#7d7d7d"/></svg>
<div id="vr" class="a"><div class="g"></div>
<div class="d" style="top:14px"></div>
<div class="h" style="top:28px"></div>
<div class="d" style="top:43px"></div>
<div class="n" style="top:58px"><span>1</span></div>
<div class="d" style="top:73px"></div>
<div class="h" style="top:87px"></div>
<div class="d" style="top:102px"></div>
<div class="d" style="top:132px"></div>
<div class="h" style="top:147px"></div>
<div class="d" style="top:161px"></div>
<div class="n" style="top:176px"><span>1</span></div>
<div class="d" style="top:191px"></div>
<div class="h" style="top:206px"></div>
<div class="d" style="top:220px"></div>
<div class="n" style="top:235px"><span>2</span></div>
<div class="d" style="top:250px"></div>
<div class="h" style="top:265px"></div>
<div class="d" style="top:279px"></div>
<div class="n" style="top:294px"><span>3</span></div>
<div class="d" style="top:309px"></div>
<div class="h" style="top:324px"></div>
<div class="d" style="top:338px"></div>
<div class="n" style="top:353px"><span>4</span></div>
<div class="d" style="top:368px"></div>
<div class="h" style="top:383px"></div>
<div class="d" style="top:397px"></div>
<div class="n" style="top:412px"><span>5</span></div>
<div class="d" style="top:427px"></div>
<div class="h" style="top:442px"></div>
<div class="d" style="top:457px"></div>
<div class="n" style="top:471px"><span>6</span></div>
<div class="d" style="top:486px"></div>
<div class="h" style="top:501px"></div>
</div>
<div id="docpg" class="a">
<div class="a band"></div>
<div class="a cm"></div>
<div class="a" style="left:73px;top:144px;width:1004px;height:440px;border:1px solid #c4c4c4;border-bottom:0"></div>
<div class="dl" id="L0" style="left:75px;top:145.2px">door,·only·the·local·Jehovah's·Witnesses·fr</div>
<div class="dl" id="R0" style="right:276px;top:145.2px;letter-spacing:-.1px">om·the·Castle·Hill's·district·of</div>
<div class="dl" id="L1" style="left:75px;top:188px">Sydney·knock·on·the·front·door.·¶</div>
<div class="dl" id="L2" style="left:105px;top:237px">The·driveway·and·parking·area·was·baking</div>
<div class="dl" id="R2" style="right:263px;top:237px">·in·the·temperature·of·the</div>
<div class="dl" id="L3" style="left:75px;top:280px">sunny·summer·day.·I·wondered·if·that·was·</div>
<div class="dl" id="R3" style="right:226px;top:280px">due·to·the·body-armour·being·a</div>
<div class="dl" id="L4" style="left:75px;top:323px">special·woven·composite·that·increased·warm</div>
<div class="dl" id="R4" style="right:232px;top:323px">th,·I·was·sweating·like·I·was</div>
<div class="dl" id="L5" style="left:75px;top:365.7px">wearing·a·thick·shirt.·Could·be·stress</div>
<div class="dl" id="R5" style="right:497px;top:365.7px">more·or·less.·¶</div>
<div class="dl" id="L6" style="left:105px;top:416.2px">¶</div>
<div class="dl" id="L7" style="left:105px;top:466px">¶</div>
<div class="dl" id="L8" style="left:105px;top:513px">The·cops·had·tear-gas·or·something·similar·in·a·grenade·launcher·gun.·I·didn't·have·breathing</div>
<div class="dl" id="L9" style="left:75px;top:557.5px">apparatus,·but·then·again·I·could·hold·my·breath·for·four·minutes.·Longer·if·I·was·sitting·still,·calm</div>
<svg style="left:274px;top:168px" width="97" height="4" viewBox="0 0 97 4"><path d="M0 2l2 -2l2 2l2 -2l2 2l2 -2l2 2l2 -2l2 2l2 -2l2 2l2 -2l2 2l2 -2l2 2l2 -2l2 2l2 -2l2 2l2 -2l2 2l2 -2l2 2l2 -2l2 2l2 -2l2 2l2 -2l2 2l2 -2l2 2l2 -2l2 2l2 -2l2 2l2 -2l2 2l2 -2l2 2l2 -2l2 2l2 -2l2 2l2 -2l2 2l2 -2l2 2l2 -2l2 2" fill="none" stroke="#e02020" stroke-width="1" transform="translate(0,1)"/></svg>
</div>
</div>
<!-- SCROLLBARS / RIGHT EDGE -->
<style>
#vs{left:1336px;top:120px;width:22px;height:600px;background:linear-gradient(to right,#ececec 0,#f4f4f4 30%,#f6f6f6 60%,#ededed 100%)}
.nb{position:absolute;left:1px;width:19px;height:19px;border:1px solid #6f6f6f;border-radius:3px;background:linear-gradient(to bottom,#f5f5f5 0,#ececec 50%,#dcdcdc 51%,#d2d2d2 100%);box-shadow:inset 0 0 0 1px #fbfbfb}
#hs{left:2px;top:720px;width:1334px;height:20px;background:linear-gradient(to bottom,#ececec 0,#f3f3f3 40%,#f1f1f1 100%)}
#hs .th{position:absolute;left:101px;top:1px;width:1058px;height:18px;border:1px solid #979797;border-radius:3px;background:linear-gradient(to bottom,#f2f2f2 0,#e8e8e8 45%,#d6d6d6 55%,#c9c9c9 100%);box-shadow:inset 0 0 0 1px #f8f8f8}
</style>
<div id="vs" class="a">
 <svg style="left:6px;top:8px" width="9" height="5" viewBox="0 0 9 5"><defs><linearGradient id="ga" x1="0" y1="0" x2="0" y2="1"><stop offset="0" stop-color="#2a2a2a"/><stop offset="1" stop-color="#8a8a8a"/></linearGradient></defs><path d="M0 5l4.500-5 4.500 5z" fill="url(#ga)"/></svg>
 <div class="a" style="left:1px;top:236px;width:19px;height:14px;border:1px solid #8e8e8e;border-radius:2px;background:linear-gradient(to right,#f3f3f3,#dedede 60%,#cfcfcf);box-shadow:inset 0 0 0 1px #fafafa">
  <div class="a" style="left:5px;top:3px;width:8px;height:1px;background:#5a5a5a;box-shadow:0 3px 0 #5a5a5a,0 6px 0 #5a5a5a,0 1px 0 #fff,0 4px 0 #fff,0 7px 0 #fff"></div>
 </div>
 <svg style="left:6px;top:522px" width="9" height="5" viewBox="0 0 9 5"><path d="M0 0l4.500 5 4.500-5z" fill="#5a5a5a"/></svg>
 <div class="nb" style="top:537px"><svg style="left:3px;top:2px" width="11" height="13" viewBox="0 0 11 13"><path d="M0 6l5.500-6 5.500 6zM0 13l5.500-6 5.500 6z" fill="#000"/></svg></div>
 <div class="nb" style="top:558px"><svg style="left:4px;top:4px" width="9" height="9" viewBox="0 0 9 9"><circle cx="4.500" cy="4.500" r="3.800" fill="#6f8fb0" stroke="#33506f"/></svg></div>
 <div class="nb" style="top:579px"><svg style="left:3px;top:2px" width="11" height="13" viewBox="0 0 11 13"><path d="M0 0l5.500 6 5.500-6zM0 7l5.500 6 5.500-6z" fill="#000"/></svg></div>
</div>
<div id="hs" class="a">
 <svg style="left:7px;top:5px" width="6" height="10" viewBox="0 0 6 10"><path d="M6 0l-5.500 5 5.500 5z" fill="#5f5f5f"/></svg>
 <div class="th"><div class="a" style="left:524px;top:4px;width:1px;height:8px;background:#6a6a6a;box-shadow:3px 0 0 #6a6a6a,6px 0 0 #6a6a6a,1px 0 0 #fff,4px 0 0 #fff,7px 0 0 #fff"></div></div>
 <svg style="left:1320px;top:5px" width="6" height="10" viewBox="0 0 6 10"><path d="M0 0l5.500 5-5.500 5z" fill="#5f5f5f"/></svg>
</div>
<!-- right edge strip -->
<div class="a" style="left:1358px;top:120px;width:8px;height:620px;background:linear-gradient(to right,#e9e9e9,#f7f7f7 40%,#fdfdfd 70%,#f2f2f2)"></div>
<div class="a" style="left:1364px;top:27px;width:1px;height:300px;background:#2a3a5c"></div>
<div class="a" style="left:1365px;top:27px;width:1px;height:741px;background:#dfe6f3"></div>
<div class="a" style="left:1364px;top:327px;width:1px;height:413px;background:#2a3038"></div><div class="a" style="left:1365px;top:327px;width:1px;height:413px;background:#aeb4bc"></div>
<div class="a" style="left:1360px;top:412px;width:3px;height:34px;background:repeating-linear-gradient(to bottom,#8a8a8a 0,#8a8a8a 1px,transparent 1px,transparent 4px)"></div>
<!-- STATUS BAR -->
<style>
#sb{left:0;top:740px;width:1366px;height:28px;background:#f0f0f0;border-top:1px solid #fafafa;font-size:15px}
#sb .t{top:8px;letter-spacing:-.12px}
#sb .s{position:absolute;top:4px;width:1px;height:22px;background:#a8a8a8;box-shadow:1px 0 0 #fff}
</style>
<div id="sb" class="a">
 <div class="t" style="left:12px">Page 26 / 56</div>
 <div class="s" style="left:207px"></div>
 <div class="t" style="left:215px">Default</div>
 <div class="s" style="left:383px"></div>
 <div class="t" style="left:446px">English (Australia)</div>
 <div class="s" style="left:630px"></div>
 <div class="t" style="left:636px;letter-spacing:-.7px">INSRT</div>
 <div class="s" style="left:684px"></div>
 <div class="t" style="left:691px;letter-spacing:-.8px">STD</div>
 <div class="s" style="left:727px"></div>
 <div class="t" style="left:734px">*</div>
 <div class="s" style="left:748px"></div>
 <div class="s" style="left:779px"></div>
 <div class="s" style="left:1090px"></div>
 <svg style="left:1099px;top:9px" width="60" height="13" viewBox="0 0 60 13"><path d="M.5.5h5.500l3 3v9h-8.500z" fill="#fff" stroke="#9ba2ab"/><path d="M15.500.5h5.500l2.500 2.500v9.500h-8z" fill="#c5d9f1" stroke="#3c5f8e"/><path d="M25.500.5h5.500l2.500 2.500v9.500h-8z" fill="#c5d9f1" stroke="#3c5f8e"/><path d="M40.500 2.500h5l3 -2v12h-8zM48.500.5h5l3 2.500v9.500h-8z" fill="#f2f2f2" stroke="#8d939b"/></svg>
 <div class="s" style="left:1168px"></div>
 <svg style="left:1173px;top:9px" width="134" height="15" viewBox="0 0 134 15"><path d="M17 5.500h99" stroke="#7b7b7b"/><path d="M27.500 1.500v10" stroke="#7b7b7b"/><circle cx="6.500" cy="7.500" r="5.500" fill="#cfe0f3" stroke="#4a6d9c"/><path d="M3.500 7.500h6" stroke="#1e3f6d" stroke-width="1.400"/><circle cx="126" cy="7.500" r="5.500" fill="#cfe0f3" stroke="#4a6d9c"/><path d="M123 7.500h6M126 4.500v6" stroke="#1e3f6d" stroke-width="1.400"/><circle cx="67.700" cy="7" r="3.800" fill="#6e8db3" stroke="#30507a"/></svg>
 <div class="s" style="left:1313px"></div>
 <div class="t" style="left:1319px;font-size:15px;top:8px;letter-spacing:-.8px">125%</div>
</div>
<!-- COMMENT NOTE -->
<style>
#note{left:1231px;top:389px;width:105px;height:154px;background:#fefd98;border-top:1px solid #d4b44a;overflow:hidden;font-family:"DejaVu Sans","Liberation Sans",sans-serif}
#note .t{left:1px;font-size:18.500px;letter-spacing:-.25px;color:#000}
#note .m{color:#b8992a;font-size:15px;letter-spacing:-.1px}
</style>
<svg style="left:920px;top:385px" width="312" height="40" viewBox="0 0 312 40"><path d="M0 33.500h275l37-29.500" fill="none" stroke="#d9b95c" stroke-width="1.200" stroke-dasharray="9 5"/></svg>
<div id="note" class="a">
 <div class="t" style="top:7px">Summer yesterday</div>
 <div class="t" style="top:36px;letter-spacing:0">29 degrees, it will</div>
 <div class="t" style="top:65px">cause sweating in</div>
 <div class="t" style="top:94px;letter-spacing:.4px">body-armour.</div>
 <div class="t m" style="top:119px;letter-spacing:.1px">Tim Scanlon</div>
 <div class="t m" style="top:137px;letter-spacing:-.1px">Today, 19:17</div>
</div>
<!-- WORD COUNT DIALOG -->
<style>
#dlg{left:440px;top:226px;width:486px;height:315px;border-radius:7px;border:1px solid #2d3138;
 background:linear-gradient(to right,#d6e7fa 0,#c3dcf6 25%,#b3d2f3 58%,#c4ddf7 75%,#d9e9fb 100%);
 box-shadow:inset 0 0 0 1px rgba(255,255,255,.75),3px 5px 10px 1px rgba(0,0,0,.52),0 1px 13px 3px rgba(0,0,0,.3),0 0 2px 1px rgba(0,0,0,.4)}
#dlg .ttl{left:9px;top:10px;font-size:15px;letter-spacing:-.1px}
#dlg .cl{left:419px;top:0;width:59px;height:24px;border:1px solid #4a2a2a;border-top:0;border-radius:0 0 5px 5px;
 background:linear-gradient(to bottom,#edb1a8 0,#e39a8f 45%,#d1533d 50%,#cf4a33 75%,#dc7c5e 100%);box-shadow:inset 0 0 0 1px rgba(255,255,255,.35)}
#dlg .cli{left:7px;top:34px;width:470px;height:272px;background:#f0f0f0;border:1px solid #6d7a88;box-shadow:inset 0 0 0 1px #fdfdfd}
#dlg .cli .t{font-size:15px}
#dlg .ln{position:absolute;height:1px;background:#a0a0a0}
#dlg .v{position:absolute;right:24px;white-space:pre;line-height:1;font-size:15px;letter-spacing:-.5px}
#dlg .ch{letter-spacing:-.35px}
#dlg .cs{letter-spacing:-.15px}
.btn2{position:absolute;width:136px;height:33px;border:1px solid #707070;border-radius:3px;background:linear-gradient(to bottom,#f3f3f3 0,#ececec 48%,#dedede 52%,#d2d2d2 100%);box-shadow:inset 0 0 0 1px #fcfcfc;font-size:15px;text-align:center;line-height:31px}
</style>
<div id="dlg" class="a">
 <div class="a" style="left:6px;top:307px;width:396px;height:6px;background:repeating-linear-gradient(to right,#5f7a9c 0,#7693b6 9px,#b5d0ec 14px,#6985a8 22px,#a9c6e4 27px,#5d789a 36px,#b9d3ee 41px);filter:blur(1.200px);opacity:.95"></div>
 <div class="a" style="left:1px;top:76px;width:6px;height:14px;background:#7d99bb;filter:blur(1.500px);opacity:.75"></div>
 <div class="a" style="left:1px;top:119px;width:6px;height:14px;background:#7d99bb;filter:blur(1.500px);opacity:.75"></div>
 <div class="a" style="left:1px;top:168px;width:6px;height:14px;background:#7d99bb;filter:blur(1.500px);opacity:.75"></div>
 <div class="a" style="left:1px;top:211px;width:6px;height:14px;background:#7d99bb;filter:blur(1.500px);opacity:.75"></div>
 <div class="a" style="left:1px;top:254px;width:6px;height:14px;background:#7d99bb;filter:blur(1.500px);opacity:.75"></div>
 <div class="a" style="left:1px;top:297px;width:6px;height:14px;background:#7d99bb;filter:blur(1.500px);opacity:.75"></div>
 <div class="a" style="left:478px;top:76px;width:6px;height:14px;background:#7d99bb;filter:blur(1.500px);opacity:.75"></div>
 <div class="a" style="left:478px;top:168px;width:6px;height:14px;background:#7d99bb;filter:blur(1.500px);opacity:.75"></div>
 <div class="a" style="left:478px;top:211px;width:6px;height:14px;background:#7d99bb;filter:blur(1.500px);opacity:.75"></div>
 <div class="a" style="left:478px;top:254px;width:6px;height:14px;background:#7d99bb;filter:blur(1.500px);opacity:.75"></div>
 <div class="a" style="left:2px;top:6px;width:100px;height:22px;border-radius:10px;background:rgba(255,255,255,.55);filter:blur(5px)"></div>
 <div class="t ttl">Word Count</div>
 <div class="a cl"><svg style="left:20px;top:4px" width="18" height="15" viewBox="0 0 18 15"><path d="M1.500 1.500h4.300l3.200 3.500 3.200-3.500h4.300l-5.300 5.800 5.300 5.800h-4.300l-3.200-3.500-3.200 3.500h-4.300l5.300-5.800z" fill="#fff" stroke="#5b3535" stroke-width="1"/></svg></div>
 <div class="a cli">
  <div class="t cs" style="left:17px;top:11px">Current selection</div><div class="ln" style="left:132px;top:17px;width:320px"></div>
  <div class="t" style="left:33px;top:38px">Words:</div><div class="v" style="top:38px">0</div>
  <div class="t ch" style="left:33px;top:68px">Characters:</div><div class="v" style="top:68px">0</div>
  <div class="t" style="left:17px;top:103px;letter-spacing:.2px">Whole document</div><div class="ln" style="left:136px;top:109px;width:316px"></div>
  <div class="t" style="left:33px;top:131px">Words:</div><div class="v" style="top:131px">27097</div>
  <div class="t ch" style="left:33px;top:161px">Characters:</div><div class="v" style="top:161px">143651</div>
  <div class="ln" style="left:17px;top:202px;width:435px"></div>
  <div class="btn2" style="left:169px;top:221px;border-color:#3c7fb1;box-shadow:inset 0 0 0 1px #48d2f4,inset 0 0 0 2px #bfeaf8"><span style="display:inline-block;width:22px;height:21px;line-height:21px;outline:1px dotted #000;outline-offset:0;vertical-align:middle;margin-top:-5px;position:relative;left:1px;top:1px">OK</span></div>
  <div class="btn2" style="left:315px;top:221px"><u>H</u>elp</div>
 </div>
</div>
</body></html>
